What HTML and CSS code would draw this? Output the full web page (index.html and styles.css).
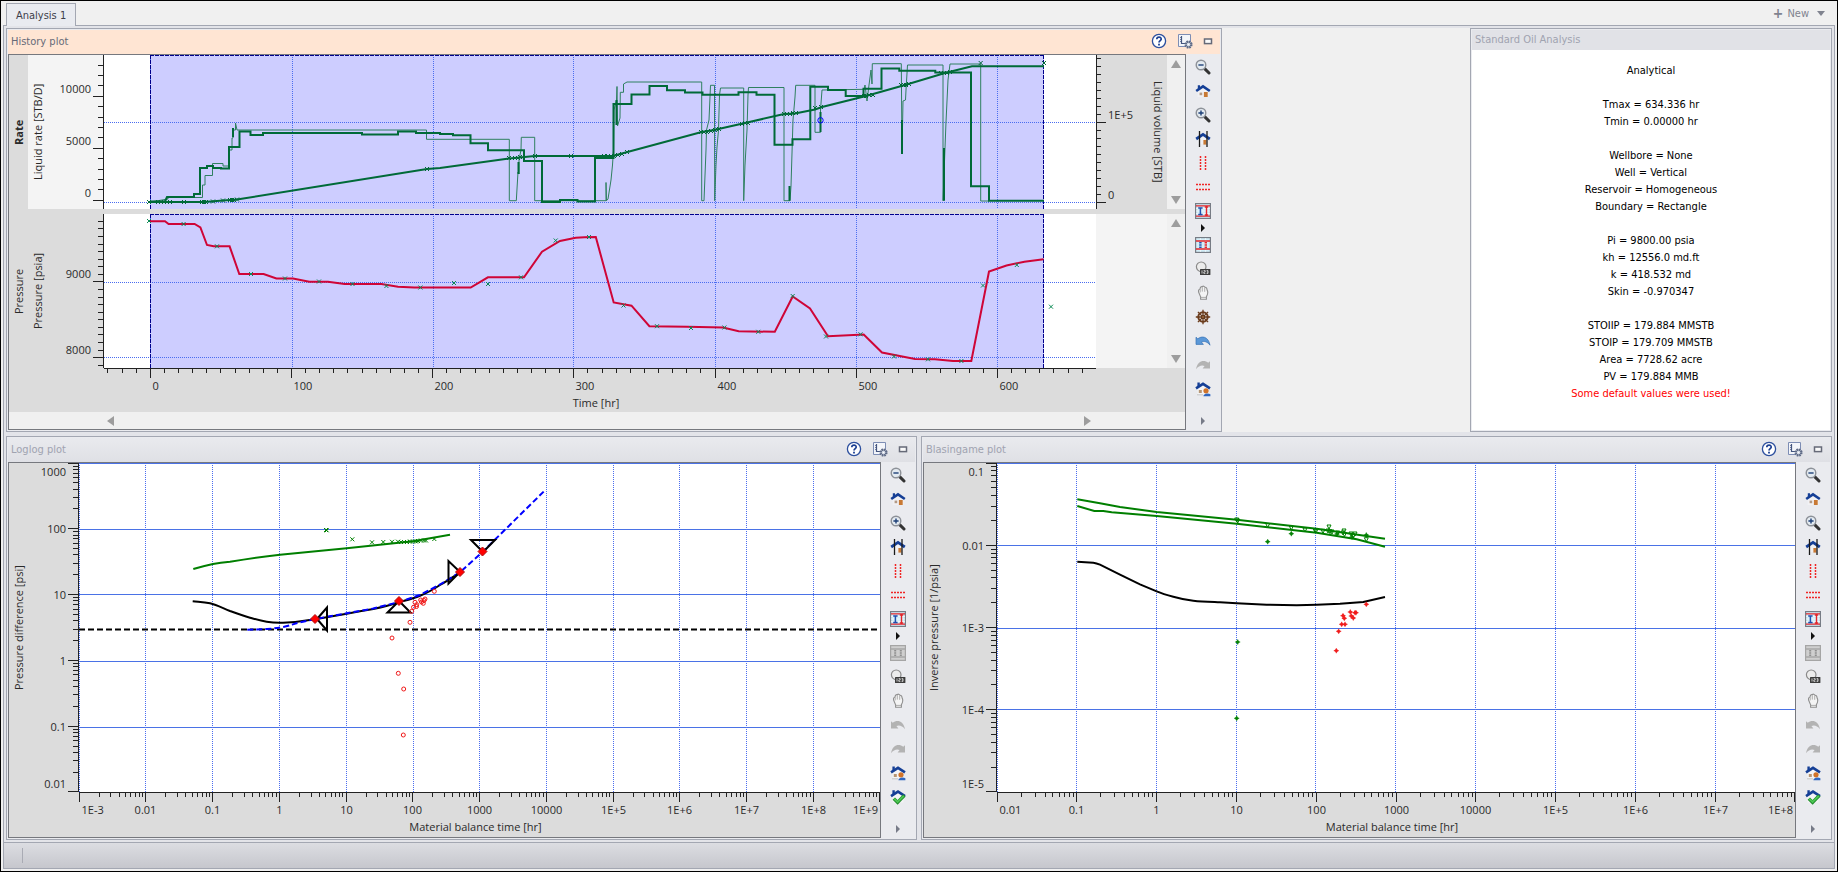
FILE: index.html
```html
<!DOCTYPE html>
<html lang="en">
<head>
    <meta charset="UTF-8">
    <meta name="viewport" content="width=device-width, initial-scale=1.0">
    <title>Analysis 1</title>
    <link rel="stylesheet" href="styles.css">
</head>
<body>

<!-- Icon set -->
<svg class="icon-defs" aria-hidden="true">
    <symbol id="i-help" viewBox="0 0 16 16">
        <circle cx="8" cy="8" r="6.6" fill="#fff" stroke="#2c4f9e" stroke-width="1.3"/>
        <path d="M5.8 6.3C5.8 3.4 10.3 3.5 10.2 6.1C10.1 7.6 8 7.7 8 9.6" fill="none" stroke="#1c3f92" stroke-width="1.7"/>
        <rect x="7.1" y="10.7" width="1.8" height="1.8" fill="#1c3f92"/>
    </symbol>
    <symbol id="i-settings" viewBox="0 0 16 16">
        <path d="M1.5 1.5H13.5V13.5H1.5Z" fill="#f3f5fa" stroke="#7d8db4"/>
        <path d="M4.5 3V10.5H8" fill="none" stroke="#44557f" stroke-width="1.2"/>
        <path d="M3 4.5H4.5M3 6.5H4.5M3 8.5H4.5" stroke="#44557f" stroke-width=".7"/>
        <circle cx="11.5" cy="11.5" r="3.2" fill="#dfe3ec" stroke="#5e6a86" stroke-width="1.8" stroke-dasharray="1.7 .8"/>
        <circle cx="11.5" cy="11.5" r="2.4" fill="#cfd5e2" stroke="#5e6a86"/>
        <circle cx="11.5" cy="11.5" r=".8" fill="#fff"/>
    </symbol>
    <symbol id="i-restore" viewBox="0 0 16 16">
        <rect x="4.5" y="6" width="7" height="4.6" fill="#fafafa" stroke="#666a78" stroke-width="1.5"/>
    </symbol>
    <symbol id="i-zoom-out" viewBox="0 0 16 16">
        <path d="M9.6 9.6L14 14" stroke="#333" stroke-width="3" stroke-linecap="round"/>
        <circle cx="6" cy="6" r="4.8" fill="#e3eaf0" stroke="#8d9198" stroke-width="1.4"/>
        <path d="M3.4 6H8.6" stroke="#1d3f77" stroke-width="1.4"/>
    </symbol>
    <symbol id="i-zoom-in" viewBox="0 0 16 16">
        <path d="M9.6 9.6L14 14" stroke="#333" stroke-width="3" stroke-linecap="round"/>
        <circle cx="6" cy="6" r="4.8" fill="#e3eaf0" stroke="#8d9198" stroke-width="1.4"/>
        <path d="M3.4 6H8.6M6 3.4V8.6" stroke="#1d3f77" stroke-width="1.4"/>
    </symbol>
    <symbol id="i-home" viewBox="0 0 16 16">
        <path d="M2.6 7.5L8 4L13.4 7.5V14H2.6Z" fill="#f1f1f4"/>
        <path d="M1.2 8L8 3.4L14.8 8" fill="none" stroke="#153f96" stroke-width="2.6"/>
        <path d="M2.8 2.2H5V5L2.8 6.4Z" fill="#153f96"/>
        <rect x="4.6" y="9.6" width="2.6" height="2.6" fill="#b29a86"/>
        <rect x="8.9" y="9" width="3.8" height="5" fill="#c87934"/>
    </symbol>
    <symbol id="i-home-x" viewBox="0 0 16 16">
        <path d="M2.6 7.5L8 4L13.4 7.5V13H2.6Z" fill="#f1f1f4"/>
        <path d="M1.2 8L8 3.4L14.8 8" fill="none" stroke="#153f96" stroke-width="2.8"/>
        <rect x="8.4" y="9" width="3" height="4.6" fill="#c87934"/>
        <path d="M4.5 0V16M12 0V16" stroke="#1a1a1a" stroke-width="1.3"/>
    </symbol>
    <symbol id="i-vlines" viewBox="0 0 16 16">
        <path d="M5.5 1V15M10.5 1V15" stroke="#f02525" stroke-width="1.5" stroke-dasharray="2 1"/>
    </symbol>
    <symbol id="i-hlines" viewBox="0 0 16 16">
        <path d="M1 5.5H15M1 10.5H15" stroke="#f02525" stroke-width="1.5" stroke-dasharray="2 1"/>
    </symbol>
    <symbol id="i-fit" viewBox="0 0 16 16">
        <rect x=".6" y=".6" width="14.8" height="14.8" fill="#d3eef8" stroke="#777c85" stroke-width="1.2"/>
        <path d="M1 5.5H15M1 8H15M1 10.5H15" stroke="#fff" stroke-width=".6"/>
        <path d="M1 2.8H15M1 13.2H15" stroke="#e2252a" stroke-width="1.3"/>
        <path d="M11.5 3V13M9.8 4H13.2M9.8 12H13.2" stroke="#e2252a" stroke-width="1.4"/>
        <path d="M5.4 5V11.4M3.2 5H7.6M3.2 11.4H7.6" stroke="#1f4fae" stroke-width="1.5"/>
    </symbol>
    <symbol id="i-range" viewBox="0 0 16 16">
        <rect x=".6" y=".6" width="14.8" height="14.8" fill="#d3eef8" stroke="#777c85" stroke-width="1.2"/>
        <path d="M5.4 1V15M10.6 1V15" stroke="#fff" stroke-width=".6"/>
        <path d="M1 4H15M1 12H15" stroke="#e2252a" stroke-width="1.4"/>
        <path d="M5.4 5V11" stroke="#1f4fae" stroke-width="2.4" stroke-dasharray="1.6 .6"/>
        <path d="M10.8 5V11" stroke="#e2252a" stroke-width="2.4" stroke-dasharray="1.6 .6"/>
    </symbol>
    <symbol id="i-range-off" viewBox="0 0 16 16">
        <rect x=".6" y=".6" width="14.8" height="14.8" fill="#cfcfcf" stroke="#a5a5a5" stroke-width="1.2"/>
        <path d="M1 4H15M1 12H15" stroke="#a8a8a8" stroke-width="1.3"/>
        <path d="M5.2 5V11M10.8 5V11" stroke="#8f8f8f" stroke-width="2" stroke-dasharray="1.6 .6"/>
    </symbol>
    <symbol id="i-values" viewBox="0 0 16 16">
        <circle cx="6.2" cy="5.8" r="4.8" fill="#ececec" stroke="#8a8a8a" stroke-width="1.2"/>
        <rect x="5" y="8" width="10.4" height="6" rx=".6" fill="#3c3c3c"/>
        <path d="M7 9.4V12.6M8.6 9.6H10.2V11H8.8V12.4H10.4M11.6 9.6H13V12.4H11.6M11.8 11H13" fill="none" stroke="#e8e8e8" stroke-width=".8"/>
    </symbol>
    <symbol id="i-hand" viewBox="0 0 16 16">
        <path d="M4.2 8.6C2.8 6 3.6 4.4 5 4C5.2 2 6.4 1.4 7.2 1.8C8 .8 9.4 1 9.8 2.2C11.2 2 12 3.2 12 4.6C13.2 6.6 12.6 9.6 11.4 11.6V14.2H5.6V11.8Z" fill="#f4f4f4" stroke="#8f8f8f" stroke-width="1.1"/>
        <path d="M5.2 4.4V7.4M7.3 2.4V6.6M9.7 2.8V6.8M5.6 12.4H11.4" stroke="#9c9c9c" stroke-width=".8"/>
    </symbol>
    <symbol id="i-wheel" viewBox="0 0 16 16">
        <path d="M8 .8V15.2M.8 8H15.2M2.9 2.9L13.1 13.1M13.1 2.9L2.9 13.1" stroke="#6a3b1b" stroke-width="1.3"/>
        <circle cx="8" cy="8" r="4.7" fill="none" stroke="#6a3b1b" stroke-width="2"/>
        <circle cx="8" cy="8" r="1.7" fill="#8e5a31" stroke="#4e2a12" stroke-width=".6"/>
    </symbol>
    <symbol id="i-undo" viewBox="0 0 16 16">
        <path d="M1 4.2L2.8 5.8C6.6 2.6 13.4 3.2 15 12.2C12.4 8.6 9 7.8 6.4 9L8.4 11.4H1Z" fill="#5b98d8" stroke="#3a72b4" stroke-width=".7"/>
    </symbol>
    <symbol id="i-undo-off" viewBox="0 0 16 16">
        <path d="M1 4.2L2.8 5.8C6.6 2.6 13.4 3.2 15 12.2C12.4 8.6 9 7.8 6.4 9L8.4 11.4H1Z" fill="#b3b3b3"/>
    </symbol>
    <symbol id="i-redo-off" viewBox="0 0 16 16">
        <path d="M15 4.2L13.2 5.8C9.4 2.6 2.6 3.2 1 12.2C3.6 8.6 7 7.8 9.6 9L7.6 11.4H15Z" fill="#b3b3b3"/>
    </symbol>
    <symbol id="i-home-user" viewBox="0 0 16 16">
        <path d="M2.6 7L8 3.4L13.4 7V13.4H2.6Z" fill="#f4f4f6"/>
        <path d="M1 7.4L8 2.8L15 7.4" fill="none" stroke="#153f96" stroke-width="2.6"/>
        <path d="M2.4 1.4H4.8V4.6L2.4 6Z" fill="#153f96"/>
        <rect x="3.8" y="9" width="3" height="3" fill="#b59574"/>
        <path d="M2 13.8H8" stroke="#bbb" stroke-width=".8"/>
        <circle cx="11" cy="9.8" r="2.6" fill="#d0732a"/>
        <path d="M8.4 15.2C8.6 12.4 13 12 15.4 13.2V15.2Z" fill="#2f66c0"/>
    </symbol>
    <symbol id="i-home-ok" viewBox="0 0 16 16">
        <path d="M2.6 7L8 3.4L13.4 7V13.4H2.6Z" fill="#f4f4f6"/>
        <path d="M1 7.2L8 2.6L15 7.2" fill="none" stroke="#153f96" stroke-width="2.6"/>
        <path d="M2.4 1.2H4.8V4.4L2.4 5.8Z" fill="#153f96"/>
        <path d="M3.8 9.6L7.6 13.4L14.4 6.4" fill="none" stroke="#1f8a2a" stroke-width="3.4"/>
        <path d="M4.2 9.8L7.6 13L13.8 6.8" fill="none" stroke="#4cc653" stroke-width="1.9"/>
    </symbol>
</svg>

<nav class="tab-bar">
    <button class="tab" type="button">Analysis 1</button>
    <button class="new-tab" type="button"><b>+</b> New <i class="caret"></i></button>
</nav>

<main class="frame">
    <div class="workspace">
        <div class="row row-top">

            <!-- History plot -->
            <section class="panel active">
                <header class="panel-header">
                    <h2>History plot</h2>
                    <button type="button" aria-label="Help"><svg><use href="#i-help"/></svg></button>
                    <button type="button" aria-label="Settings"><svg><use href="#i-settings"/></svg></button>
                    <button class="restore" type="button" aria-label="Restore"><svg><use href="#i-restore"/></svg></button>
                </header>
                <div class="panel-body">
                    <div class="chart history">
                        <div class="side-title strong">Rate</div>
                        <div class="y-axis light">
                            <span class="side-title">Liquid rate [STB/D]</span>
                            <svg class="axis" data-side="left" data-min="-837" data-max="13970" data-major="5000" data-minor="1000" data-shift="-8"></svg>
                        </div>
                        <svg class="plot" viewBox="104 55 992 154" preserveAspectRatio="none">
                            <rect class="selection" x="150" y="55" width="894" height="154"/>
                            <g class="grid dotted" data-x="150 292 433 573 715 856 997" data-y="122 202"></g>
                            <path class="select-line" d="M150 55.5H1044M150.5 55V209M1043.5 55V209"/>
                            <path class="rate-raw" d="M150 202L168 199V197.500H202.500V185H205V175.500H212.500V163.500H223V166H229V150H232V138H233V130H235.500V123L237 130H426.500V139.300H509.300V200.700H516.300L518 172L519 174V160L521 150L521.300 137.300H534.700V200.700H606V182.500L606.500 200.700L608 199L611 180L612.500 165L613.500 150L614 110L616.500 100L617 86.500L617.500 126L620 118L620.300 92.300H623.500V84L627 82H701.700V200.700H704L706 150L706.500 130L709 120L710.500 85.300H714.500L714.700 200.700L716 165L717 147L718.500 130L719.500 95L720.500 88H743.700V200.700L745 165L747 130L748 95L748.500 87.500H784V200.700H790L791 186L793 120L795 97L795.700 85.300H815V132.300H820.500V110L822 90L864 89.300L865 85L867 101L869 85L871 70L872 84L872.300 63.700H901.300L902 154L903 101L905.500 100L906 90L907.500 65H943V200.700L945 148L946 122L948 80L950 64H980.700V201H989"/>
                            <path class="rate-step" d="M150 201.500H165L167 197H194V194H200V168H207V166H213V168H221V168.500H229V147H239.500V131.500H250.500V135H263V133H362V134.500H398V131.500H416V133H440V134H453V135.300H470.500V143.300H488V150.300H524V161H542V202H560V200H577.500V201.500H595V158H613.500V104H631.500V94.500H649.500V86H667V90.300H685V92.500H702.500V94.700H738.500V92.300H756.500V94.700H774.500V144.700H792.500V139.300H810.300V86.700H828V90H845.700V96H863.500V88.700H881.500V68.500H899.300V70.700H935.300V72.500H971V186.300H989V200.700H1044"/>
                            <path class="volume" d="M150 202H204L223 200.500L237 199.500L427 169L440 168L509 158.500L534.700 156H613L620 154L701.700 132L714 130L745 123L784 114L795 113.500L815 109.500L822 107L866 96L905 85L945 73L972 66.300H1044"/>
                            <path class="rate-dense" d="M944 148V200.700M789.500 186V200.700M616.500 100V125M902 120V154M820.500 112V132M518.500 162V174M233 128V137"/>
                            <g class="marks green" data-mark="x" data-points="149,202 158,202 161,202 164,202 167,202 170,202 184,202 202,202 204,202 206,202 213,201.500 223,200.500 230,200 232,200 234,200 237,199.500 427,169 509,158 515,158 518,158 520,157 535,156 571,156 604,156 608,156 611,156 614,156 618,155 622,154 627,152 701,132 704,132 707,132 711,131 715,130 719,129 742,124 745,123 748,123 784,114 787,114 790,114 793,113 796,113 815,108 821,107 864,96 866,96 869,95 873,95 901,85 904,85 906,85 909,84 941,73 944,73 947,73 950,72 980.700,63 1044,63"></g>
                            <circle class="pick" cx="820.500" cy="120.300" r="2.700"/>
                        </svg>
                        <div class="y2-axis">
                            <svg class="axis" data-side="right" data-min="-8780" data-max="184400" data-major="100000" data-minor="10000" data-shift="-8"></svg>
                            <span class="side-title flipped">Liquid volume [STB]</span>
                        </div>
                        <div class="v-scroll"><button class="up" type="button" aria-label="Up"></button><button class="down" type="button" aria-label="Down"></button></div>

                        <div class="split"></div>

                        <div class="side-title">Pressure</div>
                        <div class="y-axis">
                            <span class="side-title">Pressure [psia]</span>
                            <svg class="axis" data-side="left" data-min="7864" data-max="9898" data-major="1000" data-minor="100" data-shift="-8"></svg>
                        </div>
                        <svg class="plot" viewBox="104 214 992 154" preserveAspectRatio="none">
                            <rect class="selection" x="150" y="214" width="894" height="154"/>
                            <g class="grid dotted" data-x="150 292 433 573 715 856 997" data-y="282 357"></g>
                            <path class="select-line" d="M150 214.500H1044M150.500 214V368M1043.500 214V368"/>
                            <path class="pressure" d="M150 221.300H165L168.600 224H194.600L200.400 227.500L207 245L213.600 246.300H229.600L239.300 274H263.600L276.400 278.500H293L309.300 281.700H328L344.600 284H381.400L398 286.700L414.300 287.500H470.700L487.900 277.300H524L542 251.700L560 241L575.700 237.800L584.600 237.300L595.800 237L613.700 302.500L631.500 305.700L649.400 326.200L687 326.800L723 327.500L738.700 331.300L774.800 331.800L792.700 296.500L810 308.500L828 336.200L863.700 334.500L882 352.500L915 359L935 359.300L953 361H971.300L989 271.500L1006.500 265.500L1024.400 261.700L1043.600 259.300"/>
                            <g class="marks teal" data-mark="x" data-points="149,221 183.600,224 217,246.300 251,274 285,278.500 319,281.500 352.500,284 386.400,286 420.400,287.500 454,283 488,284 521,277.300 555.700,240.500 589,237 623.500,305.500 657,326.200 691,328 724.400,327.500 758.300,331.800 792.700,296 826,336.500 860.500,334.300 894,356.500 928,359.300 961.400,361 983,285.500 1016.800,265 1051,306.700"></g>
                        </svg>
                        <div class="y2-axis empty"></div>
                        <div class="v-scroll"><button class="up" type="button" aria-label="Up"></button><button class="down" type="button" aria-label="Down"></button></div>

                        <div class="x-axis">
                            <svg class="axis" data-side="bottom" data-min="-32.8" data-max="669.8" data-major="100" data-minor="10" data-shift="2"></svg>
                            <span class="x-title">Time [hr]</span>
                        </div>
                        <div class="h-scroll"><button class="left" type="button" aria-label="Left"></button><button class="right" type="button" aria-label="Right"></button></div>
                    </div>
                    <div class="toolbar">
                        <button type="button" aria-label="Zoom out"><svg><use href="#i-zoom-out"/></svg></button>
                        <button type="button" aria-label="Home"><svg><use href="#i-home"/></svg></button>
                        <button type="button" aria-label="Zoom in"><svg><use href="#i-zoom-in"/></svg></button>
                        <button type="button" aria-label="Home X"><svg><use href="#i-home-x"/></svg></button>
                        <button type="button" aria-label="Vertical lines"><svg><use href="#i-vlines"/></svg></button>
                        <button type="button" aria-label="Horizontal lines"><svg><use href="#i-hlines"/></svg></button>
                        <button type="button" aria-label="Fit"><svg><use href="#i-fit"/></svg></button>
                        <button class="expand" type="button" aria-label="Fit options"></button>
                        <button type="button" aria-label="Range"><svg><use href="#i-range"/></svg></button>
                        <button type="button" aria-label="Values"><svg><use href="#i-values"/></svg></button>
                        <button type="button" aria-label="Pan"><svg><use href="#i-hand"/></svg></button>
                        <button type="button" aria-label="Navigate"><svg><use href="#i-wheel"/></svg></button>
                        <button type="button" aria-label="Undo"><svg><use href="#i-undo"/></svg></button>
                        <button type="button" aria-label="Redo" disabled><svg><use href="#i-redo-off"/></svg></button>
                        <button type="button" aria-label="User home"><svg><use href="#i-home-user"/></svg></button>
                        <button class="expand more" type="button" aria-label="More"></button>
                    </div>
                </div>
            </section>

            <div></div>

            <!-- Results -->
            <section class="panel results">
                <header class="panel-header"><h2>Standard Oil Analysis</h2></header>
                <div class="results-body">
                    <p>Analytical</p>
                    <p>Tmax = 634.336 hr<br>Tmin = 0.00000 hr</p>
                    <p>Wellbore = None<br>Well = Vertical<br>Reservoir = Homogeneous<br>Boundary = Rectangle</p>
                    <p>Pi = 9800.00 psia<br>kh = 12556.0 md.ft<br>k = 418.532 md<br>Skin = -0.970347</p>
                    <p>STOIIP = 179.884 MMSTB<br>STOIP = 179.709 MMSTB<br>Area = 7728.62 acre<br>PV = 179.884 MMB<br><span class="warning">Some default values were used!</span></p>
                </div>
            </section>
        </div>

        <div class="row row-bottom">

            <!-- Loglog plot -->
            <section class="panel">
                <header class="panel-header">
                    <h2>Loglog plot</h2>
                    <button type="button" aria-label="Help"><svg><use href="#i-help"/></svg></button>
                    <button type="button" aria-label="Settings"><svg><use href="#i-settings"/></svg></button>
                    <button class="restore" type="button" aria-label="Restore"><svg><use href="#i-restore"/></svg></button>
                </header>
                <div class="panel-body">
                    <div class="chart loglog">
                        <div class="y-axis">
                            <span class="side-title">Pressure difference [psi]</span>
                            <svg class="axis" data-side="left" data-log data-min="-2" data-max="3"></svg>
                        </div>
                        <svg class="plot" viewBox="79 463 801 329" preserveAspectRatio="none">
                            <g class="grid solid" data-y="463 529 594 661 727"></g>
                            <g class="grid dotted" data-x="79 145 212 279 346 413 479 546 613 679 746 813"></g>
                            <path class="level" d="M79 629.500H880"/>
                            <path class="green-line" d="M193.300 569C199 567.300 206 565.500 213 564C219 562.900 224 562.300 230 561.700C246 559 262 556.500 280 554.700L346.700 548.300L413 541.300L450 534.700"/>
                            <path class="black-line" d="M192.700 601.300C200 602 204 602 210 603.300C217 605 223 608.300 230 611C237 613.500 243 615.800 250 617.700C256 619.300 260 620.500 266.700 621.700C272 622.600 278 622.900 283 622.700C294 622.300 304 621.200 315 619.300L346.700 613.700C356 612 364 610.700 373.300 609C383 607 391 605 399 602.300C407 600 413 598.500 420 595.700C427 593 434 589 440 585C447 581 453 577 460 572.300"/>
                            <path class="model" d="M247.300 629.700L267 629C274 628.500 278 628 283.300 627C290 625.500 294 623.800 300 622.300L315 619L346.700 613.300L373.300 608.500L399 602L420 595L440 584.500L460 572.300L482.700 551.700L544 491.300"/>
                            <g class="handles">
                                <path d="M317 619L327 607.500V630.500Z"/>
                                <path d="M399 601L387.500 612.500H410.500Z"/>
                                <path d="M460 572L448.500 561V583.500Z"/>
                                <path d="M483 552L471 540H495Z"/>
                            </g>
                            <path class="diamonds" d="M315 614.500L319.500 619L315 623.500L310.500 619ZM399 596.500L403.500 601L399 605.500L394.500 601ZM460 567.500L464.500 572L460 576.500L455.500 572ZM482.500 547L487 551.500L482.500 556L478 551.500Z"/>
                            <g class="marks dark-green" data-mark="x" data-points="326.700,530.300 326,530 352.300,539.300 372,542.300 383.300,542 392,541.800 398,541.700 401,542 404,542 407,542 410,541.500 413,541.500 416,541.500 418,541 421,540.500 424,540.500 426,540.500 434.300,539"></g>
                            <g class="marks red" data-mark="o" data-points="434.300,591.300 425,599 420.700,600 424,600.500 423.300,603.300 421.500,602 415,602.300 416.700,604.700 413.500,607.300 416.500,606.500 411.700,611.300 410,622.300 392,638 398.300,673.300 403.700,689 403.300,735"></g>
                        </svg>
                        <div class="x-axis">
                            <svg class="axis" data-side="bottom" data-log data-min="-3" data-max="9"></svg>
                            <span class="x-title">Material balance time [hr]</span>
                        </div>
                    </div>
                    <div class="toolbar">
                        <button type="button" aria-label="Zoom out"><svg><use href="#i-zoom-out"/></svg></button>
                        <button type="button" aria-label="Home"><svg><use href="#i-home"/></svg></button>
                        <button type="button" aria-label="Zoom in"><svg><use href="#i-zoom-in"/></svg></button>
                        <button type="button" aria-label="Home X"><svg><use href="#i-home-x"/></svg></button>
                        <button type="button" aria-label="Vertical lines"><svg><use href="#i-vlines"/></svg></button>
                        <button type="button" aria-label="Horizontal lines"><svg><use href="#i-hlines"/></svg></button>
                        <button type="button" aria-label="Fit"><svg><use href="#i-fit"/></svg></button>
                        <button class="expand" type="button" aria-label="Fit options"></button>
                        <button type="button" aria-label="Range" disabled><svg><use href="#i-range-off"/></svg></button>
                        <button type="button" aria-label="Values"><svg><use href="#i-values"/></svg></button>
                        <button type="button" aria-label="Pan"><svg><use href="#i-hand"/></svg></button>
                        <button type="button" aria-label="Undo" disabled><svg><use href="#i-undo-off"/></svg></button>
                        <button type="button" aria-label="Redo" disabled><svg><use href="#i-redo-off"/></svg></button>
                        <button type="button" aria-label="User home"><svg><use href="#i-home-user"/></svg></button>
                        <button type="button" aria-label="Accept home"><svg><use href="#i-home-ok"/></svg></button>
                        <button class="expand more" type="button" aria-label="More"></button>
                    </div>
                </div>
            </section>

            <!-- Blasingame plot -->
            <section class="panel">
                <header class="panel-header">
                    <h2>Blasingame plot</h2>
                    <button type="button" aria-label="Help"><svg><use href="#i-help"/></svg></button>
                    <button type="button" aria-label="Settings"><svg><use href="#i-settings"/></svg></button>
                    <button class="restore" type="button" aria-label="Restore"><svg><use href="#i-restore"/></svg></button>
                </header>
                <div class="panel-body">
                    <div class="chart blasingame">
                        <div class="y-axis">
                            <span class="side-title">Inverse pressure [1/psia]</span>
                            <svg class="axis" data-side="left" data-log data-min="-5" data-max="-1"></svg>
                        </div>
                        <svg class="plot" viewBox="997 463 798 329" preserveAspectRatio="none">
                            <g class="grid solid" data-y="463 545 628 709"></g>
                            <g class="grid dotted" data-x="997 1076 1156 1236 1315 1395 1475 1555 1635 1715"></g>
                            <path class="green-line" d="M1077.300 499.300L1100 503.300L1120 507L1156.700 512L1236.700 519.700L1316.700 528.700L1385 538.700"/>
                            <path class="green-line" d="M1077.300 506L1094.300 511H1103.300L1111.700 512.300L1156.700 516L1236.700 523.700L1316.700 532.700L1356.700 539.300L1385 546.700"/>
                            <path class="black-line" d="M1077.300 561.700L1093.300 562.700C1096 563 1098 563.800 1100 564.700L1120 574.700L1140 584.300L1156.700 591.300C1162 593.500 1167 595 1173.300 596.700C1180 598.600 1186 600 1193.300 600.700C1202 601.700 1211 601.900 1220 602.300L1236.700 603.300L1266.700 604.700L1296.700 605.300L1316.700 604.700L1340 603.700L1363.300 602L1385 597"/>
                            <g class="marks dark-green" data-mark="v" data-points="1236.700,520 1237.700,521 1267.700,525.500 1291.300,528 1305,530 1315,530.500 1316,531 1323,531.300 1329,527 1328,531 1330,531.700 1332,532 1337.700,533 1344,531 1343,533 1344.500,534.500 1351,534 1353.300,536 1355,534 1366.300,539.700"></g>
                            <g class="marks dark-green" data-mark="p" data-points="1267.700,541.700 1291.300,533.700 1366.300,535 1237.700,642 1236.700,718.300 1337,534 1352,537"></g>
                            <g class="marks red" data-mark="p" data-points="1366.300,604.300 1350.300,612 1355,612.700 1356,612.700 1351.300,616 1353.300,618 1343,615.700 1344.300,618.300 1341.700,624.300 1345,624.300 1338.700,631.300 1336.300,650.700"></g>
                        </svg>
                        <div class="x-axis">
                            <svg class="axis" data-side="bottom" data-log data-min="-2" data-max="8"></svg>
                            <span class="x-title">Material balance time [hr]</span>
                        </div>
                    </div>
                    <div class="toolbar">
                        <button type="button" aria-label="Zoom out"><svg><use href="#i-zoom-out"/></svg></button>
                        <button type="button" aria-label="Home"><svg><use href="#i-home"/></svg></button>
                        <button type="button" aria-label="Zoom in"><svg><use href="#i-zoom-in"/></svg></button>
                        <button type="button" aria-label="Home X"><svg><use href="#i-home-x"/></svg></button>
                        <button type="button" aria-label="Vertical lines"><svg><use href="#i-vlines"/></svg></button>
                        <button type="button" aria-label="Horizontal lines"><svg><use href="#i-hlines"/></svg></button>
                        <button type="button" aria-label="Fit"><svg><use href="#i-fit"/></svg></button>
                        <button class="expand" type="button" aria-label="Fit options"></button>
                        <button type="button" aria-label="Range" disabled><svg><use href="#i-range-off"/></svg></button>
                        <button type="button" aria-label="Values"><svg><use href="#i-values"/></svg></button>
                        <button type="button" aria-label="Pan"><svg><use href="#i-hand"/></svg></button>
                        <button type="button" aria-label="Undo" disabled><svg><use href="#i-undo-off"/></svg></button>
                        <button type="button" aria-label="Redo" disabled><svg><use href="#i-redo-off"/></svg></button>
                        <button type="button" aria-label="User home"><svg><use href="#i-home-user"/></svg></button>
                        <button type="button" aria-label="Accept home"><svg><use href="#i-home-ok"/></svg></button>
                        <button class="expand more" type="button" aria-label="More"></button>
                    </div>
                </div>
            </section>
        </div>
    </div>
    <footer class="status-bar"><span></span></footer>
</main>

<script src="plots.js"></script>
</body>
</html>
```
FILE: styles.css
```css
* {
    box-sizing: border-box;
}
body {
    margin: 0;
    height: 100vh;
    min-height: 700px;
    display: flex;
    flex-direction: column;
    border: 1px solid #000;
    background: #f0f0f0;
    color: #1e1e1e;
    font-family: "DejaVu Sans Condensed", "DejaVu Sans", sans-serif;
    font-size: 11px;
}
button {
    border: none;
    background: none;
    padding: 0;
    color: inherit;
    font: inherit;
}
.icon-defs {
    display: none;
}

/* Tabs */
.tab-bar {
    display: flex;
    justify-content: space-between;
    align-items: flex-end;
    height: 24px;
    padding: 0 12px 0 5px;
}
.tab {
    position: relative;
    z-index: 1;
    height: 23px;
    margin-bottom: -1px;
    padding: 0 9px;
    border: 1px solid #a3a7b2;
    border-bottom: none;
    background: #e9ebf0;
    color: #3c3e4a;
}
.new-tab {
    display: flex;
    align-items: center;
    gap: 4px;
    height: 24px;
    color: #80838f;
}
.new-tab b {
    font-size: 14px;
}
.caret {
    margin-left: 4px;
    border: 4px solid transparent;
    border-top: 5px solid #80838f;
    border-bottom: none;
}

/* Frame */
.frame {
    flex: 1;
    min-height: 0;
    display: flex;
    flex-direction: column;
    margin: 0 2px 2px;
    border: 1px solid #a3a7b2;
}
.workspace {
    flex: 1;
    min-height: 0;
    display: grid;
    grid-template-rows: minmax(0, 1fr) minmax(0, 1fr);
    gap: 4px;
    padding: 2px;
    background: #e3e4e9;
}
.row {
    display: grid;
    min-height: 0;
}
.row-top {
    grid-template-columns: 1216fr 248fr 362fr;
    background: #f0f0f0;
}
.row-bottom {
    grid-template-columns: minmax(0, 1fr) minmax(0, 1fr);
    gap: 4px;
}
.status-bar {
    height: 26px;
    padding: 5px 0 5px 18px;
    border-top: 1px solid #a3a7b2;
    background: linear-gradient(#dcdde2, #c6c7cd);
}
.status-bar span {
    display: block;
    width: 1px;
    height: 15px;
    background: #a9abb4;
}

/* Panels */
.panel {
    display: flex;
    flex-direction: column;
    min-width: 0;
    min-height: 0;
    padding: 1px;
    border: 1px solid #a3a7b2;
    background: #eaebef;
}
.panel-header {
    display: flex;
    align-items: center;
    gap: 10px;
    height: 24px;
    padding: 0 4px 2px 3px;
    background: linear-gradient(#e9eaee, #dfe0e5);
    color: #a0a3b0;
}
.panel-header h2 {
    flex: 1;
    margin: 0;
    font-size: 11px;
    font-weight: normal;
}
.active .panel-header {
    background: #ffe5d3;
    color: #666a78;
}
.panel-header button,
.panel-header svg {
    display: block;
    width: 16px;
    height: 16px;
}
.panel-header .restore {
    margin-left: -3px;
}
.panel-body {
    flex: 1;
    min-height: 0;
    display: flex;
}
.results .panel-header {
    height: 20px;
    background: #e1e2e7;
}
.results-body {
    flex: 1;
    padding-top: 12px;
    background: #fff;
    color: #000;
    line-height: 17px;
    text-align: center;
}
.results-body p {
    margin: 0 0 17px;
}
.warning {
    color: #f00;
}

/* Toolbar */
.toolbar {
    display: flex;
    flex-direction: column;
    align-items: center;
    width: 34px;
    padding-top: 1px;
}
.toolbar button {
    flex: 0 0 24px;
    display: grid;
    place-items: center;
    width: 24px;
}
.toolbar svg {
    display: block;
    width: 16px;
    height: 16px;
}
.toolbar .expand {
    flex-basis: 10px;
}
.expand::before {
    content: "";
    border: 4px solid transparent;
    border-left: 4px solid #111;
    border-right: none;
}
.toolbar .more {
    margin: auto 0 4px;
}
.more::before {
    border-left-color: #777b88;
}

/* Charts */
.chart {
    flex: 1;
    min-width: 0;
    display: grid;
    border: 1px solid #76787e;
    background: #dcdcdc;
    color: #2a2a2a;
    font-family: "Open Sans", "Noto Sans", sans-serif;
}
.history {
    grid-template-columns: 19px 76px minmax(0, 1fr) 71px 18px;
    grid-template-rows: minmax(0, 1fr) 5px minmax(0, 1fr) 44px 17px;
}
.loglog {
    grid-template-columns: 70px minmax(0, 1fr);
    grid-template-rows: minmax(0, 1fr) 45px;
}
.blasingame {
    grid-template-columns: 73px minmax(0, 1fr);
    grid-template-rows: minmax(0, 1fr) 45px;
}
.side-title {
    display: flex;
    align-items: center;
    justify-content: center;
    width: 19px;
    writing-mode: vertical-rl;
    transform: rotate(180deg);
    font-size: 11px;
    line-height: 18px;
    white-space: nowrap;
}
.side-title.flipped {
    transform: none;
}
.side-title.strong {
    font-weight: bold;
}
.y-axis,
.y2-axis {
    display: flex;
    min-width: 0;
    min-height: 0;
}
.y-axis {
    border-right: 1px solid #222;
}
.y-axis.light,
.y2-axis.empty {
    background: #f4f4f4;
}
.y2-axis:not(.empty) {
    border-left: 1px solid #222;
}
.y-axis .axis,
.y2-axis .axis {
    flex: 1;
    min-width: 0;
    height: 100%;
}
.x-axis {
    grid-column: 2;
    display: flex;
    flex-direction: column;
    align-items: center;
    border-top: 1px solid #222;
}
.history .x-axis {
    grid-column: 3;
}
.x-axis .axis {
    width: 100%;
    height: 26px;
}
.x-title {
    padding-right: 8px;
    font-size: 11px;
    line-height: 16px;
}
.axis {
    display: block;
    overflow: visible;
    font-size: 11px;
}
.axis line {
    stroke: #222;
    shape-rendering: crispEdges;
}
.axis text {
    fill: #2a2a2a;
}
.split {
    grid-column: 1 / -1;
}
.v-scroll {
    display: flex;
    flex-direction: column;
    justify-content: space-between;
    align-items: center;
    padding: 5px 0;
    background: #f0f0f0;
}
.h-scroll {
    grid-column: 1 / -1;
    display: flex;
    justify-content: space-between;
    align-items: center;
    padding: 0 94px 0 98px;
    background: #f0f0f0;
}
.v-scroll button,
.h-scroll button {
    border: 5px solid transparent;
}
.v-scroll .up {
    border-top: none;
    border-bottom: 8px solid #9d9d9d;
}
.v-scroll .down {
    border-bottom: none;
    border-top: 8px solid #9d9d9d;
}
.h-scroll .left {
    border-left: none;
    border-right: 7px solid #9d9d9d;
}
.h-scroll .right {
    border-right: none;
    border-left: 7px solid #9d9d9d;
}

/* Curves */
.plot {
    display: block;
    width: 100%;
    height: 100%;
    background: #fff;
}
.plot path,
.plot line {
    fill: none;
    vector-effect: non-scaling-stroke;
}
.selection {
    fill: #cdcdff;
}
.select-line {
    stroke: #00008b;
    stroke-dasharray: 4 1;
}
.grid line {
    shape-rendering: crispEdges;
}
.grid.dotted line {
    stroke: #4a6df0;
    stroke-dasharray: 1 1;
}
.grid.solid line {
    stroke: #4a72e6;
}
.rate-raw {
    stroke: #2f8060;
}
.rate-step,
.rate-dense,
.volume {
    stroke: #006a38;
    stroke-width: 2;
}
.pressure {
    stroke: #cf0537;
    stroke-width: 2;
}
.pick {
    fill: none;
    stroke: #00f;
}
.level {
    stroke: #000;
    stroke-width: 2;
    stroke-dasharray: 6 3;
}
.green-line {
    stroke: #007f00;
    stroke-width: 2;
}
.black-line {
    stroke: #000;
    stroke-width: 2;
}
.model {
    stroke: #00f;
    stroke-width: 2;
    stroke-dasharray: 6 3;
}
.handles path {
    stroke: #000;
    stroke-width: 2;
}
.plot .diamonds {
    fill: #f00;
    stroke: #b01010;
}
.marks.green {
    stroke: #006a38;
}
.marks.teal {
    stroke: #0c8a55;
}
.marks.dark-green {
    stroke: #008000;
}
.marks.red {
    stroke: #f01818;
}
```
FILE: plots.js
```js
const SVG = 'http://www.w3.org/2000/svg';

// marker outlines, drawn around 0,0
const shapes = {
    x: 'm-2 -2l4 4m-4 0l4 -4',
    p: 'm-2.5 0h5m-2.5 -2.5v5m-1 -3.500h2v2h-2z',
    v: 'm-2 -2h4l-2 4z',
    o: 'm-2 0a2 2 0 1 0 4 0a2 2 0 1 0 -4 0'
};

function add(parent, name, attrs, text) {
    const el = document.createElementNS(SVG, name);
    for (const key in attrs) el.setAttribute(key, attrs[key]);
    if (text !== undefined) el.textContent = text;
    parent.appendChild(el);
    return el;
}

function formatValue(value, exp) {
    if (exp <= -3) return '1E' + exp;
    if (exp >= 5) return '1E+' + exp;
    return String(value);
}

// list of ticks: position 0..1 and a label for the major ones
function getTicks(d) {
    const min = Number(d.min), max = Number(d.max), ticks = [];
    if ('log' in d) {
        for (let e = min; e <= max; e++) {
            ticks.push({ pos: (e - min) / (max - min), label: formatValue(Number('1e' + e), e) });
            for (let k = 2; k < 10 && e < max; k++) {
                ticks.push({ pos: (e + Math.log10(k) - min) / (max - min) });
            }
        }
        return ticks;
    }
    const minor = Number(d.minor), major = Number(d.major);
    for (let i = Math.ceil(min / minor); i * minor <= max; i++) {
        const value = i * minor;
        const tick = { pos: (value - min) / (max - min) };
        if (value % major === 0) tick.label = value === 100000 ? '1E+5' : String(value);
        ticks.push(tick);
    }
    return ticks;
}

function drawAxis(svg) {
    const d = svg.dataset;
    const w = svg.clientWidth, h = svg.clientHeight;
    const shift = Number(d.shift || 0);
    svg.textContent = '';
    getTicks(d).forEach(t => {
        const len = t.label ? 10 : 5;
        if (d.side === 'bottom') {
            const x = Math.min(Math.floor(t.pos * w), w - 1) + 0.5;
            add(svg, 'line', { x1: x, x2: x, y1: 0, y2: len - 1 });
            if (!t.label) return;
            let anchor = 'middle', tx = x;
            if (shift || t.pos === 0) { anchor = 'start'; tx = x + 2; }
            if (t.pos === 1) { anchor = 'end'; tx = w - 2; }
            add(svg, 'text', { x: tx, y: 21, 'text-anchor': anchor }, t.label);
            return;
        }
        const y = Math.min(Math.floor((1 - t.pos) * h), h - 1) + 0.5;
        if (d.side === 'left') add(svg, 'line', { x1: w - len, x2: w, y1: y, y2: y });
        else add(svg, 'line', { x1: 0, x2: len - 1, y1: y, y2: y });
        if (!t.label) return;
        let ty = y + 4 + shift;
        if (!shift && t.pos === 0) ty = h - 4;
        if (!shift && t.pos === 1) ty = 13;
        const left = d.side === 'left';
        add(svg, 'text', { x: left ? w - 12 : 11, y: ty, 'text-anchor': left ? 'end' : 'start' }, t.label);
    });
}

function drawGrid(g) {
    const box = g.ownerSVGElement.viewBox.baseVal;
    (g.dataset.x || '').split(' ').filter(Boolean).forEach(v => {
        const x = Number(v) + 0.5;
        add(g, 'line', { x1: x, x2: x, y1: box.y, y2: box.y + box.height });
    });
    (g.dataset.y || '').split(' ').filter(Boolean).forEach(v => {
        const y = Number(v) + 0.5;
        add(g, 'line', { x1: box.x, x2: box.x + box.width, y1: y, y2: y });
    });
}

function drawMarks(g) {
    const path = g.dataset.points.split(' ').map(p => 'M' + p + shapes[g.dataset.mark]).join('');
    add(g, 'path', { d: path });
}

document.querySelectorAll('.grid').forEach(drawGrid);
document.querySelectorAll('.marks').forEach(drawMarks);

function drawAxes() {
    document.querySelectorAll('.axis').forEach(drawAxis);
}
drawAxes();
window.addEventListener('resize', drawAxes);
```
